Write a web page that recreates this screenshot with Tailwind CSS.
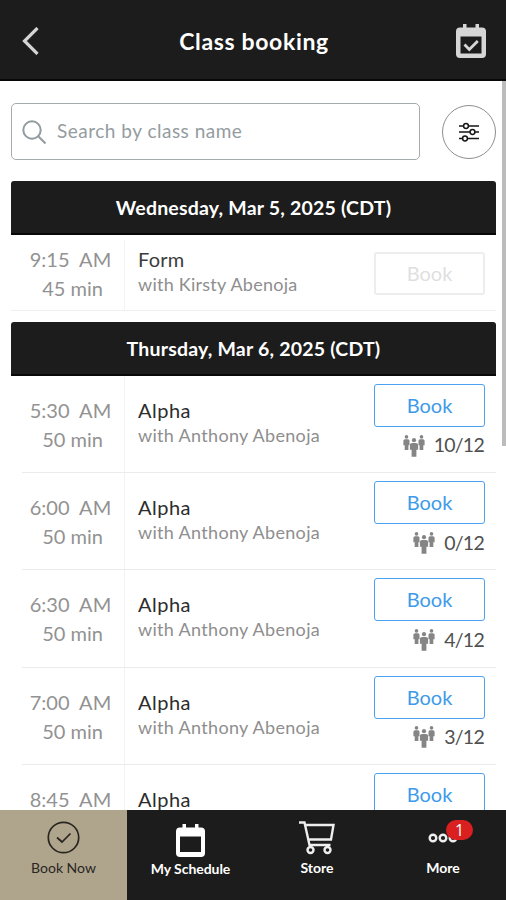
<!DOCTYPE html>
<html lang="en">
<head>
<meta charset="utf-8">
<title>Class booking</title>
<script src="https://cdn.jsdelivr.net/npm/@tailwindcss/browser@4"></script>
</head>
<body class="h-[900px] w-[506px] overflow-hidden bg-white font-['Lato','Open_Sans',sans-serif]">
<svg class="hidden">
  <symbol id="people" viewBox="0 0 22 22">
    <g fill="#858585">
      <circle cx="3.5" cy="1.900" r="1.800"/><path d="M2 4.300h3q1.500 0 1.500 1.500v4.400H5.400V15H1.700V10.200H.4V5.800q0-1.500 1.600-1.500z"/>
      <circle cx="18.5" cy="1.900" r="1.800"/><path d="M17 4.300h3q1.600 0 1.600 1.500v4.400h-1.300V15h-3.700v-4.800h-1.100V5.800q0-1.500 1.500-1.500z"/>
      <circle cx="11" cy="5.200" r="2.100"/><path d="M9.300 7.900h3.400q2.400 0 2.400 1.800v5h-1.700v7H8.600v-7H6.900v-5q0-1.800 2.400-1.800z"/>
    </g>
  </symbol>
</svg>
<div class="flex h-full flex-col">
  <header class="flex h-[81px] shrink-0 items-center justify-between border-b-2 border-[#080808] bg-[#1c1c1c] pt-[3px] pr-[20px] pl-[22px]">
    <svg class="h-[28px] w-[30px]" viewBox="0 0 30 28" fill="none" stroke="#d4d4d4" stroke-width="3.200"><path d="M15.500 1 2.500 14l13 13"/></svg>
    <h1 class="text-[23px] font-bold tracking-[0.65px] text-white">Class booking</h1>
    <svg class="h-[34px] w-[30px]" viewBox="0 0 30 34"><path fill="#d6d6d6" fill-rule="evenodd" d="M7 0h3.500v3.500h9V0H23v3.500h3q4 0 4 4V30q0 4-4 4H4q-4 0-4-4V7.500q0-4 4-4h3zM4.500 12.500V29.500h21V12.500z"/><path d="m8.500 20.500 4.800 5 8.500-8.500" fill="none" stroke="#d6d6d6" stroke-width="2.800"/></svg>
  </header>

  <main class="flex min-h-0 flex-1 overflow-hidden">
    <div class="w-[502px] shrink-0 pt-[22px] pr-[6px] pl-[11px]">
      <div class="flex items-center justify-between">
        <div class="flex h-[57px] w-[409px] items-center gap-[11px] rounded-[5px] border border-[#a5aaad] pl-[10px]">
          <svg class="h-[24px] w-[24px]" viewBox="0 0 24 24" fill="none" stroke="#929b9e" stroke-width="2"><circle cx="10" cy="10" r="8.700"/><path d="m16.500 16.500 7 7"/></svg>
          <span class="pb-[1px] text-[19px] tracking-[0.500px] text-[#949c9f]">Search by class name</span>
        </div>
        <div class="flex h-[54px] w-[54px] items-center justify-center rounded-full border border-[#8b8f90]">
          <svg class="h-[20px] w-[20px]" viewBox="0 0 20 20" fill="none" stroke="#161616" stroke-width="1.500"><path d="M0 4h4.500M9.500 4H20M0 10h11M16 10h4M0 16.500h3.500M8.500 16.500H20"/><circle cx="7" cy="4" r="2.400"/><circle cx="13.500" cy="10" r="2.400"/><circle cx="6" cy="16.500" r="2.400"/></svg>
        </div>
      </div>

      <section class="mt-[21px]">
        <h2 class="flex h-[54px] items-center justify-center rounded-t-[3px] border-b-2 border-[#080808] bg-[#1c1c1c] pt-[1px] text-[19.5px] font-bold tracking-[0.2px] text-white">Wednesday, Mar 5, 2025 (CDT)</h2>
        <div class="flex h-[76px] border-b border-[#efefef]">
          <div class="mt-[5px] w-[114px] border-r border-[#f3f3f3] pt-[5px] text-center text-[20px] leading-[29px] whitespace-pre text-[#929292]"><div class="pl-[6px]">9:15  AM</div><div class="pl-[10px]">45 min</div></div>
          <div class="flex-1 pt-[11px] pl-[13px]"><div class="text-[20px] leading-[26px] tracking-[0.2px] text-[#3c3c3c]">Form</div><div class="text-[18px] leading-[25px] tracking-[0.25px] text-[#8e8e8e]">with Kirsty Abenoja</div></div>
          <div class="mt-[17px] mr-[11px] flex h-[43px] w-[111px] items-center justify-center rounded-[3px] border-2 border-[#ededed] pb-[2px] text-[20px] text-[#dfdfdf]">Book</div>
        </div>
      </section>

      <section class="mt-[11px]">
        <h2 class="flex h-[54px] items-center justify-center rounded-t-[3px] border-b-2 border-[#080808] bg-[#1c1c1c] pt-[1px] text-[19.5px] font-bold tracking-[0.2px] text-white">Thursday, Mar 6, 2025 (CDT)</h2>
        <div id="classes"></div>
      </section>
    </div>
    <div class="h-[365px] w-[4px] bg-[#bcbcbc]"></div>
  </main>

  <nav class="grid h-[90px] shrink-0 grid-cols-[127px_127px_126px_126px] bg-[#1c1c1c] text-[14px] leading-[18px] font-bold text-white">
    <a class="flex flex-col items-center bg-[#afa58d] pt-[11px] text-[#29251f]">
      <svg class="h-[33px] w-[33px]" viewBox="0 0 33 33" fill="none" stroke="#29251f" stroke-width="1.700"><circle cx="16.500" cy="16.500" r="15.200"/><path d="m10 16.500 5 4.500 8.500-8.500"/></svg>
      <span class="mt-[5px] font-normal">Book Now</span>
    </a>
    <a class="flex flex-col items-center pt-[14px]">
      <svg class="h-[33px] w-[29px]" viewBox="0 0 29 33"><path fill="#fff" fill-rule="evenodd" d="M6.500 0H10v3.500h9V0h3.500v3.500H25q4 0 4 4V29q0 4-4 4H4q-4 0-4-4V7.500q0-4 4-4h2.500zM4 12.500V28h21V12.500z"/></svg>
      <span class="mt-[3px] tracking-[-0.05px]">My Schedule</span>
    </a>
    <a class="flex flex-col items-center pt-[11px]">
      <svg class="h-[34px] w-[36px]" viewBox="0 0 36 34" fill="none" stroke="#eee" stroke-width="2.400"><path d="M0 1.500h5.500L10.500 24h21M6.300 4H34.500L32 18.500H9.700"/><circle cx="11.500" cy="29" r="3"/><circle cx="28.500" cy="29" r="3"/></svg>
      <span class="mt-[4px]">Store</span>
    </a>
    <a class="relative flex flex-col items-center pt-[22px]">
      <svg class="h-[12px] w-[30px]" viewBox="0 0 30 12" fill="none" stroke="#eee" stroke-width="2.400"><circle cx="5" cy="6" r="3.300"/><circle cx="15" cy="6" r="3.300"/><circle cx="25" cy="6" r="3.300"/></svg>
      <span class="absolute top-[10px] left-[66px] flex h-[20px] w-[27px] items-center justify-center rounded-full bg-[#d91f1f] font-['Open_Sans'] text-[16px] font-normal">1</span>
      <span class="mt-[15px]">More</span>
    </a>
  </nav>
</div>
<template id="row">
  <div class="flex h-[97.2px]">
    <div class="ml-[11px] flex flex-1 border-b border-[#ebebeb]">
      <div class="w-[103px] border-r border-[#f3f3f3] pt-[20px] text-center text-[20px] leading-[29px] whitespace-pre text-[#929292]"><div class="time -ml-[5px]"></div><div class="-ml-[1px]">50 min</div></div>
      <div class="flex-1 pt-[21px] pl-[13px]"><div class="text-[20px] leading-[26px] tracking-[0.5px] text-[#2c2c2c]">Alpha</div><div class="text-[18px] leading-[25px] tracking-[0.32px] text-[#8e8e8e]">with Anthony Abenoja</div></div>
      <div class="mr-[11px] w-[111px] pt-[8px]">
        <div class="flex h-[43px] items-center justify-center rounded-[3px] border-[1.500px] border-[#4ba2f2] pb-[1px] text-[20px] text-[#3e9be9]">Book</div>
        <div class="mt-[4px] flex h-[28px] items-center justify-end gap-[9px] pr-[1px] text-[19.500px] tracking-[-0.75px] text-[#505050]"><svg class="mt-[1px] h-[22px] w-[22px]"><use href="#people"/></svg><span class="count"></span></div>
      </div>
    </div>
  </div>
</template>
<script>
  const classes = [['5:30', '10'], ['6:00', '0'], ['6:30', '4'], ['7:00', '3'], ['8:45', '0']];
  for (const [time, booked] of classes) {
    const row = document.getElementById('row').content.cloneNode(true);
    row.querySelector('.time').textContent = time + '  AM';
    row.querySelector('.count').textContent = booked + '/12';
    document.getElementById('classes').append(row);
  }
</script>
</body>
</html>
